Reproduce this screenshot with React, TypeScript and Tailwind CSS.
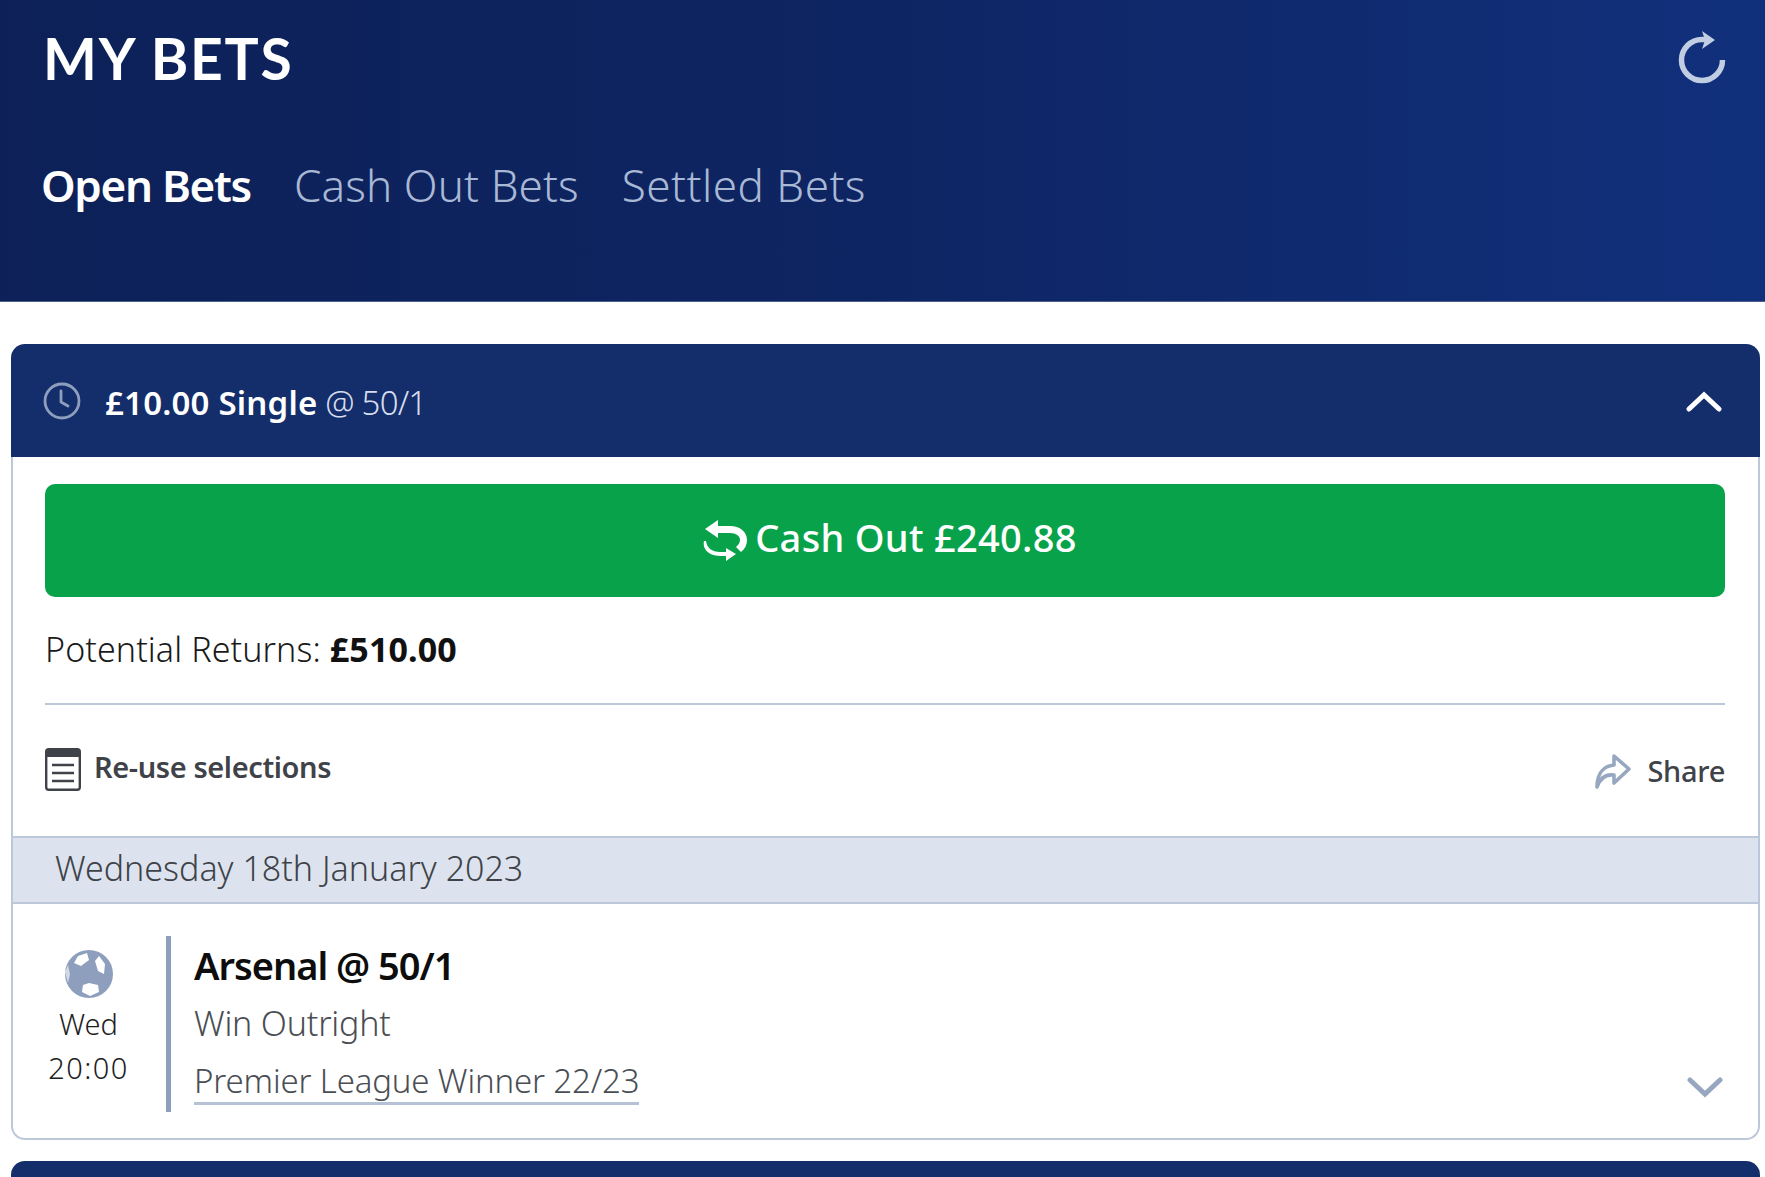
import React from "react";

function Refresh() {
  return (
    <svg width="52" height="56" viewBox="0 0 52 56" fill="none">
      <path d="M46.5 31a20.5 20.5 0 1 1-20.5-20.5h3" stroke="#c0cde3" strokeWidth="5.5" />
      <path d="M26 2l13 9-13 9 3-9z" fill="#c0cde3" />
    </svg>
  );
}

function Clock() {
  return (
    <svg width="38" height="38" viewBox="0 0 38 38" fill="none" stroke="#8e9fbd" strokeWidth="2.8">
      <circle cx="19" cy="19" r="17" />
      <path d="M18 9v11l7 4" strokeLinecap="round" strokeLinejoin="round" />
    </svg>
  );
}

function CashIcon() {
  return (
    <svg width="44" height="42" viewBox="0 0 44 42" fill="none">
      <path d="M15 0L2 9l13 9v-5h12c6 0 10 3 10 7 0 3-2 5-4 7l5 5c4-3 6-7 6-12 0-8-7-14-17-14H15z" fill="#fff" />
      <path d="M1 21c-2 9 6 15 17 15h5v5l10-7-10-6v4h-6c-8 0-13-4-14-11z" fill="#fff" />
    </svg>
  );
}

function Doc() {
  return (
    <svg width="36" height="43" viewBox="0 0 36 43" fill="none">
      <rect x="1.2" y="1.2" width="33.6" height="40.6" rx="2.5" fill="#fff" stroke="#3f4349" strokeWidth="2.4" />
      <path d="M2 3.5a2 2 0 0 1 2-2h28a2 2 0 0 1 2 2V9H2z" fill="#3f4349" />
      <path d="M7 17h22M7 25h22M7 33h22" stroke="#3f4349" strokeWidth="2.6" />
    </svg>
  );
}

function ShareIcon() {
  return (
    <svg width="36" height="36" viewBox="0 0 36 36" fill="none" stroke="#98a7c0" strokeWidth="3.6" strokeLinejoin="round" strokeLinecap="round">
      <path d="M2 34c0-14 7-21 17-22V3l15 13-15 14v-8c-8-1-14 3-17 12z" />
    </svg>
  );
}

function Ball() {
  return (
    <svg width="48" height="48" viewBox="0 0 48 48">
      <circle cx="24" cy="24" r="24" fill="#8e9fbd" />
      <path d="M13 6l9-3 2 7-8 6-7-3zM34 6l6 8-1 10-6-3-3-10zM24 33l9 2 1 7-9 4-8-4 1-7z" fill="#fff" />
      <path d="M0 22l3-7 2 9-2 9z" fill="#fff" opacity="0.6" />
    </svg>
  );
}

function Chevron({ up, color }: { up?: boolean; color: string }) {
  return (
    <svg width="36" height="22" viewBox="0 0 36 22" fill="none">
      <path d={up ? "M3 19L18 5l15 14" : "M3 4l15 14L33 4"} stroke={color} strokeWidth="5" strokeLinecap="round" strokeLinejoin="miter" />
    </svg>
  );
}

export default function App() {
  return (
    <div className="w-[1765px] h-[1177px] overflow-hidden bg-white font-['Noto_Sans',sans-serif]">
      <header className="h-[302px] bg-linear-to-r from-[#0d2158] via-[#0e2563] to-[#11307c] pl-[41px] pr-[37px] border-b border-[#4b5f8a]">
        <div className="flex items-start justify-between pt-[22px]">
          <h1 className="ml-[2px] font-['Lato',sans-serif] text-[57px] leading-[72px] font-bold tracking-[1.8px] text-white">MY BETS</h1>
          <div className="mt-[7px]"><Refresh /></div>
        </div>
        <nav className="flex gap-[43px] mt-[61px] text-[44px] leading-[60px]">
          <span className="font-semibold tracking-[-1.3px] text-white">Open Bets</span>
          <span className="text-[#a9b8d5] font-light tracking-[0.1px]">Cash Out Bets</span>
          <span className="text-[#a9b8d5] font-light tracking-[0.5px]">Settled Bets</span>
        </nav>
      </header>

      <section className="mt-[42px] ml-[11px] mr-[5px] rounded-t-[14px] overflow-hidden">
        <div className="h-[113px] bg-[#142d6b] flex items-center justify-between pl-[32px] pr-[38px] text-white">
          <div className="flex items-center">
            <Clock />
            <div className="ml-[24px] mt-[4px] text-[33px] tracking-[0.2px]">
              <span className="font-semibold">£10.00 Single</span>
              <span className="font-light text-[#d6dded] tracking-[-0.8px]"> @ 50/1</span>
            </div>
          </div>
          <Chevron up color="#ffffff" />
        </div>
      </section>

      <section className="ml-[11px] mr-[5px] h-[683px] border-2 border-t-0 border-[#bcc8da] rounded-b-[14px]">
        <div className="pl-[32px] pr-[33px] pt-[27px]">
          <button className="w-full h-[113px] rounded-[10px] bg-[#08a24b] text-white flex items-center justify-center gap-[8px] pl-[10px] text-[38px] font-medium tracking-[0.3px]">
            <CashIcon />
            <span className="-mt-[6px]">Cash Out £240.88</span>
          </button>
          <div className="mt-[27px] h-[50px] text-[34px] leading-[50px] tracking-[0.1px] text-[#1a1a1a] font-light">
            Potential Returns: <span className="font-bold text-[#111]">£510.00</span>
          </div>
          <div className="mt-[29px] border-t-2 border-[#bcc8da]" />
          <div className="h-[131px] flex items-center justify-between text-[#3f4349]">
            <div className="flex items-center gap-[13px] -mt-[2px]">
              <Doc />
              <span className="text-[29px] font-semibold tracking-[-0.4px] -mt-[6px]">Re-use selections</span>
            </div>
            <div className="flex items-center gap-[16px]">
              <ShareIcon />
              <span className="text-[29px] font-medium tracking-[-0.3px]">Share</span>
            </div>
          </div>
        </div>
        <div className="h-[68px] bg-[#dde3ee] border-y-2 border-[#bcc8da] flex items-center pl-[42px] pb-[4px] text-[34px] text-[#3f4349] font-light">
          Wednesday 18th January 2023
        </div>
        <div className="relative flex pt-[32px]">
          <div className="w-[153px] shrink-0 flex flex-col items-center pt-[14px] pr-[2px] text-[29px] leading-[44px] text-[#1e1e1e] font-light">
            <Ball />
            <span className="mt-[4px]">Wed</span>
            <span className="tracking-[1.4px]">20:00</span>
          </div>
          <div className="w-[5px] h-[176px] bg-[#8e9fbd]" />
          <div className="ml-[23px] flex flex-col items-start">
            <span className="text-[38px] leading-[59px] font-semibold tracking-[-1px] text-[#0d0d0d]">Arsenal @ 50/1</span>
            <span className="text-[34px] leading-[56px] tracking-[-0.2px] text-[#4a4e54] font-light">Win Outright</span>
            <span className="text-[33px] leading-[42px] tracking-[-0.15px] text-[#4a4e54] font-light border-b-[3px] border-[#b5c1d5] mt-[9px]">Premier League Winner 22/23</span>
          </div>
          <div className="absolute right-[35px] bottom-[14px]"><Chevron color="#98a7c0" /></div>
        </div>
      </section>

      <div className="mt-[21px] ml-[11px] mr-[5px] h-[40px] rounded-t-[14px] bg-[#142d6b]" />
    </div>
  );
}
